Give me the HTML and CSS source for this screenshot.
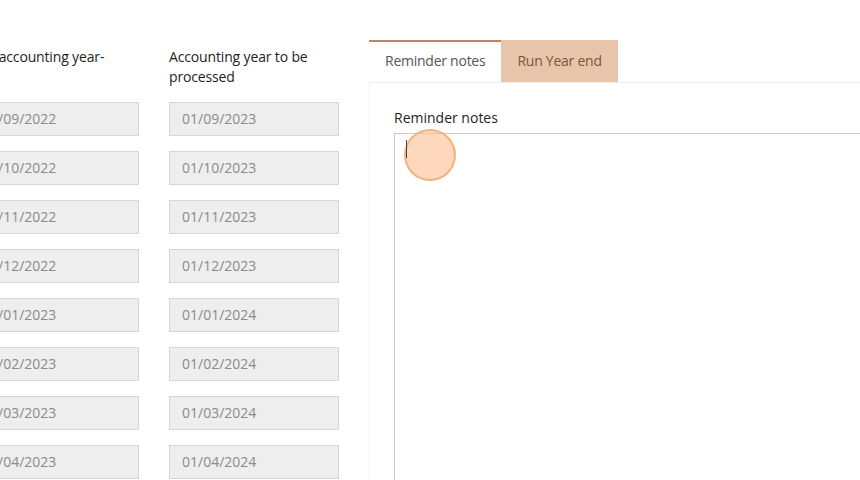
FILE: index.html
```html
<!DOCTYPE html>
<html>
<head>
<meta charset="utf-8">
<link rel="stylesheet" href="styles.css">
</head>
<body>
<div class="page">
  <div class="col col-prev">
    <div class="label label-prev">Last accounting year-end</div>
    <div class="fields">
      <div class="input">01/09/2022</div>
      <div class="input">01/10/2022</div>
      <div class="input">01/11/2022</div>
      <div class="input">01/12/2022</div>
      <div class="input">01/01/2023</div>
      <div class="input">01/02/2023</div>
      <div class="input">01/03/2023</div>
      <div class="input">01/04/2023</div>
    </div>
  </div>
  <div class="col">
    <div class="label">Accounting year to be processed</div>
    <div class="fields">
      <div class="input">01/09/2023</div>
      <div class="input">01/10/2023</div>
      <div class="input">01/11/2023</div>
      <div class="input">01/12/2023</div>
      <div class="input">01/01/2024</div>
      <div class="input">01/02/2024</div>
      <div class="input">01/03/2024</div>
      <div class="input">01/04/2024</div>
    </div>
  </div>
  <div class="tabs-area">
    <div class="tabbar">
      <div class="tab active">Reminder notes</div>
      <div class="tab inactive">Run Year end</div>
    </div>
    <div class="panel">
      <div class="panel-label">Reminder notes</div>
      <div class="notes-wrap">
        <div class="notes"></div>
        <span class="click"></span>
        <span class="caret"></span>
      </div>
    </div>
  </div>
</div>
</body>
</html>
```

FILE: styles.css
```css
html, body {
  margin: 0;
  padding: 0;
  background: #ffffff;
  overflow: hidden;
  width: 860px;
  height: 480px;
}
body {
  font-family: "Open Sans", "Noto Sans", sans-serif;
  font-size: 14px;
  color: #222;
}
.page {
  display: flex;
  align-items: flex-start;
  gap: 30px;
  margin-left: -31px;
  padding-top: 40px;
  width: 1400px;
}
.col {
  width: 170px;
  flex: 0 0 170px;
  padding-top: 7px;
}
.label {
  line-height: 20px;
  height: 40px;
  margin-bottom: 15px;
  color: #1e1e1e;
  letter-spacing: -0.15px;
}
.label-prev {
  width: 150px;
}
.fields {
  display: flex;
  flex-direction: column;
  gap: 15px;
}
.input {
  box-sizing: border-box;
  height: 34px;
  background: #eeeeee;
  border: 1px solid #d6d6d6;
  color: #8a8a8a;
  padding: 0 12px;
  line-height: 32px;
}
.tabs-area {
  flex: 0 0 auto;
  width: 700px;
}
.tabbar {
  display: flex;
  border-bottom: 1px solid #eeeeee;
}
.tab {
  box-sizing: border-box;
  height: 42px;
  line-height: 38px;
  padding: 0 16px;
  white-space: nowrap;
  border-top: 2px solid transparent;
  letter-spacing: -0.25px;
}
.tab.active {
  border-top-color: #b5895f;
  color: #555;
  background: #fff;
}
.tab.inactive {
  background: #e8c4ab;
  border-top-color: #e8c4ab;
  color: #7d5638;
}
.panel {
  border-left: 1px solid #f4f4f4;
  padding: 25px 0 0 24px;
  height: 420px;
}
.panel-label {
  line-height: 20px;
  margin-bottom: 5px;
  color: #1e1e1e;
}
.notes-wrap {
  position: relative;
}
.notes {
  box-sizing: border-box;
  width: 600px;
  height: 400px;
  border: 1px solid #c9c9c9;
  background: #fff;
}
.click {
  position: absolute;
  left: 10px;
  top: -4px;
  width: 52px;
  height: 52px;
  box-sizing: border-box;
  border-radius: 50%;
  background: rgba(252, 190, 145, 0.6);
  border: 2px solid rgba(245, 170, 110, 0.85);
}
.caret {
  position: absolute;
  left: 12px;
  top: 7px;
  width: 1px;
  height: 18px;
  background: #444;
}
```
